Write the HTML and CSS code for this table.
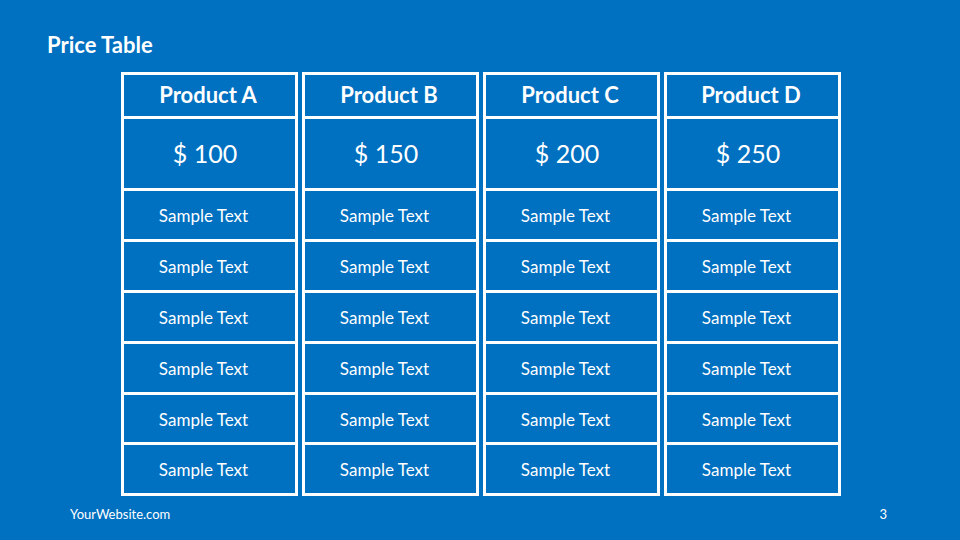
FILE: index.html
```html
<!DOCTYPE html>
<html>
<head>
<meta charset="utf-8">
<link rel="stylesheet" href="styles.css">
</head>
<body>
<div class="slide">
  <h1 class="title">Price Table</h1>
  <div class="table">
    <div class="col">
      <div class="cell head">Product A</div>
      <div class="cell price">$ 100</div>
      <div class="cell item">Sample Text</div>
      <div class="cell item">Sample Text</div>
      <div class="cell item">Sample Text</div>
      <div class="cell item">Sample Text</div>
      <div class="cell item">Sample Text</div>
      <div class="cell item">Sample Text</div>
    </div>
    <div class="col">
      <div class="cell head">Product B</div>
      <div class="cell price">$ 150</div>
      <div class="cell item">Sample Text</div>
      <div class="cell item">Sample Text</div>
      <div class="cell item">Sample Text</div>
      <div class="cell item">Sample Text</div>
      <div class="cell item">Sample Text</div>
      <div class="cell item">Sample Text</div>
    </div>
    <div class="col">
      <div class="cell head">Product C</div>
      <div class="cell price">$ 200</div>
      <div class="cell item">Sample Text</div>
      <div class="cell item">Sample Text</div>
      <div class="cell item">Sample Text</div>
      <div class="cell item">Sample Text</div>
      <div class="cell item">Sample Text</div>
      <div class="cell item">Sample Text</div>
    </div>
    <div class="col">
      <div class="cell head">Product D</div>
      <div class="cell price">$ 250</div>
      <div class="cell item">Sample Text</div>
      <div class="cell item">Sample Text</div>
      <div class="cell item">Sample Text</div>
      <div class="cell item">Sample Text</div>
      <div class="cell item">Sample Text</div>
      <div class="cell item">Sample Text</div>
    </div>
  </div>
  <div class="footer">
    <span class="site">YourWebsite.com</span>
    <span class="page">3</span>
  </div>
</div>
</body>
</html>
```
FILE: styles.css
```css
* { box-sizing: border-box; }
html, body { margin: 0; padding: 0; }
body {
  width: 960px;
  height: 540px;
  background: #0070c0;
  font-family: Lato, "Open Sans", sans-serif;
  color: #fff;
  overflow: hidden;
}
.slide {
  width: 960px;
  height: 540px;
  display: flex;
  flex-direction: column;
}
.title {
  margin: 0;
  padding: 32px 0 0 47px;
  height: 72px;
  font-size: 22px;
  font-weight: 700;
  line-height: 26px;
}
.table {
  display: grid;
  grid-template-columns: repeat(4, 177px);
  column-gap: 4px;
  margin-left: 121px;
}
.col {
  display: flex;
  flex-direction: column;
  border: 3px solid #fff;
  border-bottom: none;
}
.cell {
  display: flex;
  align-items: center;
  justify-content: center;
  border-bottom: 3px solid #fff;
}
.head {
  height: 44px;
  font-size: 22px;
  font-weight: 700;
  padding-bottom: 2px;
  padding-right: 3px;
}
.price {
  height: 72px;
  font-size: 25px;
  font-weight: 400;
  padding-right: 9px;
  padding-bottom: 2px;
}
.item {
  height: 50.9px;
  font-size: 17px;
  padding-right: 12px;
  padding-top: 1px;
}
.footer {
  display: flex;
  justify-content: space-between;
  padding: 10px 73px 0 70px;
  font-size: 13px;
  line-height: 16px;
}
```
